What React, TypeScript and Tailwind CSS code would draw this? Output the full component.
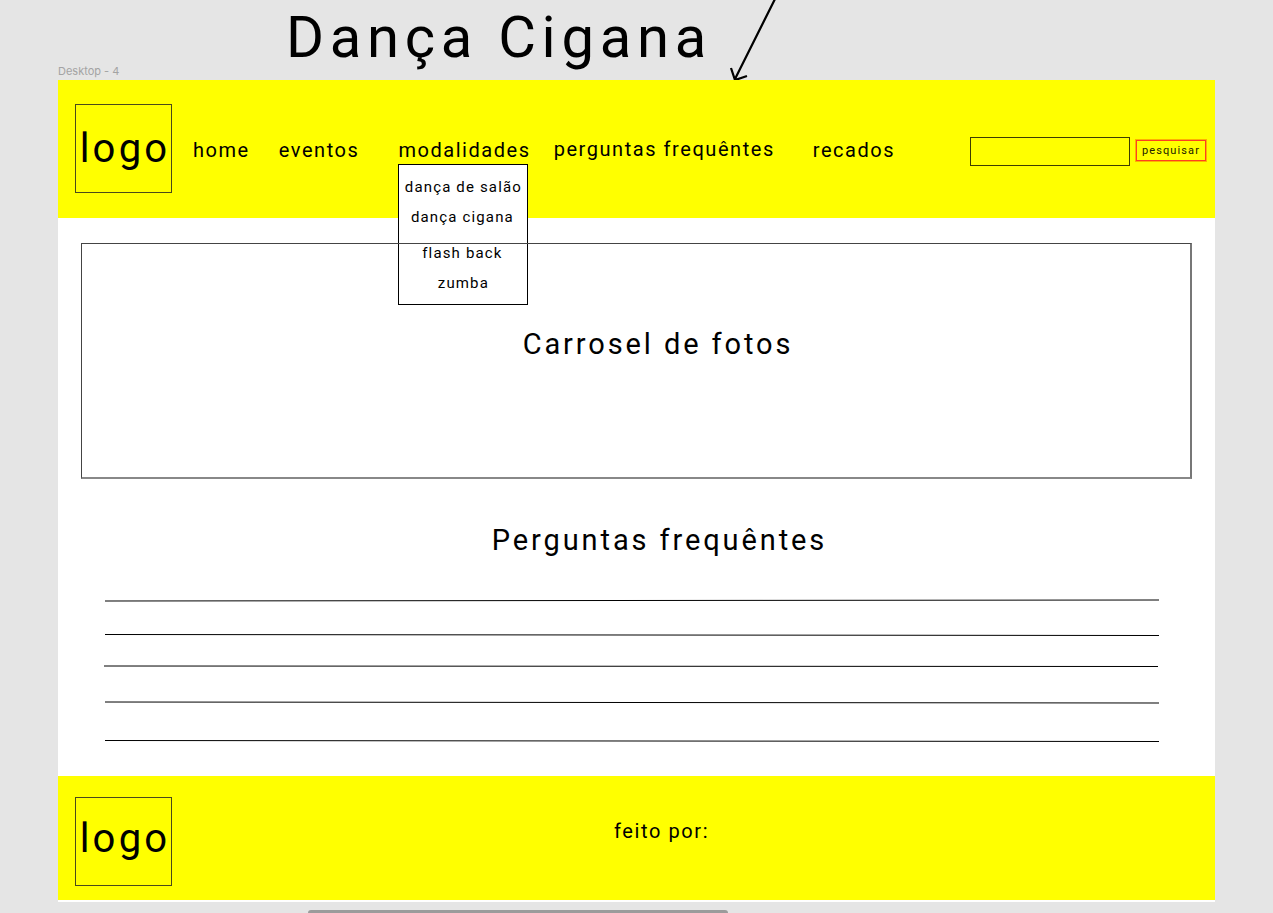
const navFont = "text-[20px] leading-[24px] tracking-[1.55px] whitespace-nowrap";

const questionLines = [
  { x1: 47, y1: 7, x2: 1101, y2: 6 },
  { x1: 47, y1: 40.5, x2: 1101, y2: 41.5 },
  { x1: 46, y1: 72, x2: 1100, y2: 72.5 },
  { x1: 47, y1: 108, x2: 1101, y2: 109 },
  { x1: 47, y1: 146.5, x2: 1101, y2: 147.5 },
];

function Logo({ className }: { className?: string }) {
  return (
    <div
      className={`flex w-[97px] items-center justify-center border border-[#4a4a1a] pl-[3px] text-[40px] leading-[48px] tracking-[3.2px] whitespace-nowrap ${className}`}
    >
      logo
    </div>
  );
}

function Dropdown() {
  return (
    <div className="absolute left-0 top-[26px] z-10 flex h-[141px] w-[130px] flex-col items-center border border-black bg-white text-[15px] leading-[18px] tracking-[1.15px] whitespace-nowrap">
      <span className="mt-[13px]">dança de salão</span>
      <span className="mt-[12px] -ml-[2px]">dança cigana</span>
      <span className="mt-[18px] -ml-[2px]">flash back</span>
      <span className="mt-[12px]">zumba</span>
    </div>
  );
}

export default function App() {
  return (
    <div className="relative h-[913px] overflow-hidden bg-[#e5e5e5] font-['Roboto',sans-serif] text-black">
      <div className="h-[65px] pl-[286px] pt-[4px] text-[58px] leading-[66px] tracking-[5.7px] whitespace-nowrap">
        Dança Cigana
      </div>

      <svg className="absolute left-[725px] top-0 h-[90px] w-[60px]" viewBox="0 0 60 90" fill="none">
        <path d="M50 -1 L10 79 M6 68 L10 80 L22 76" stroke="#000" strokeWidth="2.2" />
      </svg>

      <div className="ml-[58px] h-[15px] font-['Inter',sans-serif] text-[11px] leading-[13px] text-[#a3a3a3]">
        Desktop - 4
      </div>

      <div className="ml-[58px] flex h-[822px] w-[1157px] flex-col bg-white">
        <header className="relative flex h-[138px] shrink-0 items-start bg-[#ffff00] pl-[17px]">
          <Logo className="mt-[24px] h-[89px]" />
          <nav className="mt-[58px] ml-[21px] flex items-start">
            <span className={navFont}>home</span>
            <span className={`ml-[29px] ${navFont}`}>eventos</span>
            <span className={`relative ml-[39px] ${navFont}`}>
              modalidades
              <Dropdown />
            </span>
            <span className={`ml-[23px] -mt-[1px] ${navFont}`}>perguntas frequêntes</span>
            <span className={`ml-[38px] ${navFont}`}>recados</span>
          </nav>
          <div className="absolute left-[912px] top-[57px] flex items-start gap-[5px]">
            <div className="h-[29px] w-[160px] border border-[#3d3d00]" />
            <button className="mt-[3px] ml-[1px] flex h-[21px] w-[70px] items-center justify-center border border-[#ff4020] text-[11px] leading-[13px] tracking-[0.1em] text-[#222200] ring-1 ring-[#ffb000]">
              pesquisar
            </button>
          </div>
        </header>

        <section className="relative z-20 mx-[23px] mt-[25px] flex h-[236px] shrink-0 justify-center border border-[#444444] border-r-2 border-b-2 border-r-[#777777] border-b-[#888888] pt-[82px] pl-[44px] text-[29px] leading-[36px] tracking-[0.1em]">
          Carrosel de fotos
        </section>

        <h2 className="mt-[43px] pl-[46px] text-center text-[29px] font-normal leading-[36px] tracking-[0.1em]">
          Perguntas frequêntes
        </h2>

        <svg className="mt-[36px] h-[150px] w-[1157px] shrink-0" viewBox="0 0 1157 150" fill="none">
          {questionLines.map((line) => (
            <line key={line.y1} {...line} stroke="#000" strokeWidth="1" />
          ))}
        </svg>

        <footer className="mt-[32px] flex h-[124px] shrink-0 items-start bg-[#ffff00] pl-[17px]">
          <Logo className="mt-[21px] h-[89px] pb-[6px]" />
          <span className="mt-[43px] ml-[442px] text-[20px] leading-[24px] tracking-[1.6px] whitespace-nowrap">
            feito por:
          </span>
        </footer>
      </div>

      <div className="absolute bottom-0 left-[308px] h-[3px] w-[420px] rounded-t-[3px] bg-[#9b9b9b]" />
    </div>
  );
}
